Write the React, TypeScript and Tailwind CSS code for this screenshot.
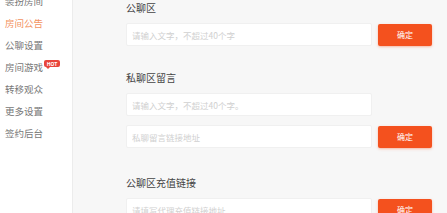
import React from 'react';

const menu = ['装扮房间', '房间公告', '公聊设置', '房间游戏', '转移观众', '更多设置', '签约后台'];

function Field({ placeholder }: { placeholder: string }) {
  return (
    <input
      placeholder={placeholder}
      className="w-[246px] h-[23px] bg-white border border-[#f0f0f0] rounded-[2px] px-[5px] text-[8.5px] text-[#666] placeholder:text-[#d0d0d0] outline-none"
    />
  );
}

function Confirm() {
  return (
    <button className="w-[54px] h-[22px] ml-[6px] bg-[#f4511e] rounded-[2px] text-white text-[8px] shadow-sm shadow-[#f4511e]/30">
      确定
    </button>
  );
}

export default function App() {
  return (
    <div
      className="flex w-[447px] h-[213px] overflow-hidden bg-[#f7f7f7]"
      style={{ fontFamily: '"Noto Sans CJK SC", "Noto Sans", sans-serif' }}
    >
      <aside className="w-[73px] shrink-0 bg-white border-r border-[#ececec]">
        <ul className="mt-[-10px]">
          {menu.map((item, i) => (
            <li
              key={item}
              className={`flex items-center h-[22px] pl-[5px] text-[9.5px] ${i === 1 ? 'text-[#f3935f]' : 'text-[#777]'}`}
            >
              <span>{item}</span>
              {item === '房间游戏' && (
                <span className="relative -top-[4px] ml-[1px] flex items-center justify-center w-[16px] h-[7px] bg-[#e8453c] rounded-[2px] text-white text-[5px] font-bold leading-none">
                  HOT
                  <span className="absolute left-[2px] -bottom-[2px] w-0 h-0 border-l-[2px] border-r-[2px] border-t-[2px] border-l-transparent border-r-transparent border-t-[#e8453c]" />
                </span>
              )}
            </li>
          ))}
        </ul>
      </aside>

      <main className="flex-1 pl-[53px]">
        <div className="h-[16px] leading-[16px] text-[10px] text-[#444]">公聊区</div>
        <div className="flex items-center mt-[7px]">
          <Field placeholder="请输入文字，不超过40个字" />
          <Confirm />
        </div>

        <div className="mt-[24px] h-[16px] leading-[16px] text-[10px] text-[#444]">私聊区留言</div>
        <div className="flex items-center mt-[7px]">
          <Field placeholder="请输入文字，不超过40个字。" />
        </div>
        <div className="flex items-center mt-[9px]">
          <Field placeholder="私聊留言链接地址" />
          <Confirm />
        </div>

        <div className="mt-[27px] h-[16px] leading-[16px] text-[10px] text-[#444]">公聊区充值链接</div>
        <div className="flex items-center mt-[7px]">
          <Field placeholder="请填写代理充值链接地址" />
          <Confirm />
        </div>
      </main>
    </div>
  );
}
